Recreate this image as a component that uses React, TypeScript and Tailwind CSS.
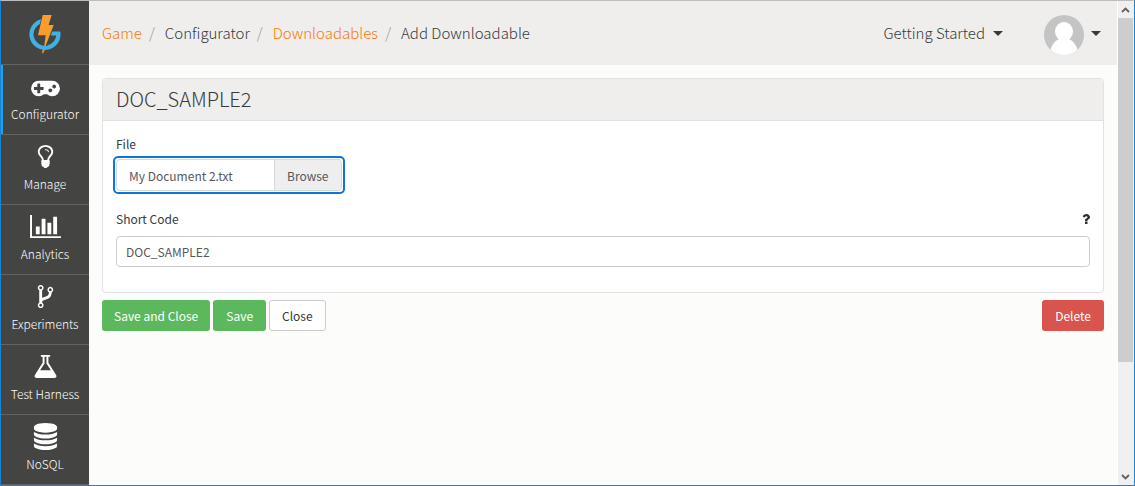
import { useState } from "react";

const icons = {
  gamepad:
    "M896 1088v-128q0-14-9-23t-23-9h-192v-192q0-14-9-23t-23-9h-128q-14 0-23 9t-9 23v192h-192q-14 0-23 9t-9 23v128q0 14 9 23t23 9h192v192q0 14 9 23t23 9h128q14 0 23-9t9-23v-192h192q14 0 23-9t9-23zm576 64q0-53-37.5-90.5t-90.5-37.5-90.5 37.5-37.5 90.5 37.5 90.5 90.5 37.5 90.5-37.5 37.5-90.5zm256-256q0-53-37.5-90.5t-90.5-37.5-90.5 37.5-37.5 90.5 37.5 90.5 90.5 37.5 90.5-37.5 37.5-90.5zm256 128q0 212-150 362t-362 150q-192 0-338-128h-220q-146 128-338 128-212 0-362-150t-150-362 150-362 362-150h896q212 0 362 150t150 362z",
  bulb: "M1120 576q0 13-9.5 22.5t-22.5 9.5-22.5-9.5-9.5-22.5q0-46-54-71t-106-25q-13 0-22.5-9.5t-9.5-22.5 9.5-22.5 22.5-9.5q50 0 99.5 16t87 54 37.5 90zm160 0q0-72-34.5-134t-90-101.5-123-62-136.5-22.5-136.5 22.5-123 62-90 101.5-34.5 134q0 101 68 180 10 11 30.5 33t30.5 33q128 153 141 298h228q13-145 141-298 10-11 30.5-33t30.5-33q68-79 68-180zm128 0q0 155-103 268-45 49-74.5 87t-59.5 95.5-34 107.5q47 28 47 82 0 37-25 64 25 27 25 64 0 52-45 81 13 23 13 47 0 46-31.5 71t-77.5 25q-20 44-60 70t-87 26-87-26-60-70q-46 0-77.5-25t-31.5-71q0-24 13-47-45-29-45-81 0-37 25-64-25-27-25-64 0-54 47-82-4-50-34-107.5t-59.5-95.5-74.5-87q-103-113-103-268 0-99 44.5-184.5t117-142 164-89 186.5-32.5 186.5 32.5 164 89 117 142 44.5 184.5z",
  chart:
    "M640 896v512h-256v-512h256zm384-512v1024h-256v-1024h256zm1024 1152v128h-2048v-1536h128v1408h1920zm-640-896v768h-256v-768h256zm384-384v1152h-256v-1152h256z",
  fork: "M672 1472q0-40-28-68t-68-28-68 28-28 68 28 68 68 28 68-28 28-68zm0-1152q0-40-28-68t-68-28-68 28-28 68 28 68 68 28 68-28 28-68zm640 128q0-40-28-68t-68-28-68 28-28 68 28 68 68 28 68-28 28-68zm96 0q0 52-26 96.5t-70 69.5q-2 287-226 414-67 38-203 81-128 40-169.5 71t-41.5 100v26q44 25 70 69.5t26 96.5q0 80-56 136t-136 56-136-56-56-136q0-52 26-96.5t70-69.5v-820q-44-25-70-69.5t-26-96.5q0-80 56-136t136-56 136 56 56 136q0 52-26 96.5t-70 69.5v497q54-26 154-57 55-17 87.5-29.5t70.5-31 59-39.5 40.5-51 28-69.5 8.5-91.5q-44-25-70-69.5t-26-96.5q0-80 56-136t136-56 136 56 56 136z",
  flask:
    "M1591 1448q56 89 21.5 152.5t-140.5 63.5h-1152q-106 0-140.5-63.5t21.5-152.5l503-793v-399h-64q-26 0-45-19t-19-45 19-45 45-19h512q26 0 45 19t19 45-19 45-45 19h-64v399zm-779-725l-272 429h712l-272-429-20-31v-436h-128v436z",
  database:
    "M896 768q237 0 443-43t325-127v170q0 69-103 128t-280 93.5-385 34.5-385-34.5-280-93.5-103-128v-170q119 84 325 127t443 43zm0 768q237 0 443-43t325-127v170q0 69-103 128t-280 93.5-385 34.5-385-34.5-280-93.5-103-128v-170q119 84 325 127t443 43zm0-384q237 0 443-43t325-127v170q0 69-103 128t-280 93.5-385 34.5-385-34.5-280-93.5-103-128v-170q119 84 325 127t443 43zm0-1152q208 0 385 34.5t280 93.5 103 128v128q0 69-103 128t-280 93.5-385 34.5-385-34.5-280-93.5-103-128v-128q0-69 103-128t280-93.5 385-34.5z",
  question:
    "M1088 1256v240q0 16-12 28t-28 12h-240q-16 0-28-12t-12-28v-240q0-16 12-28t28-12h240q16 0 28 12t12 28zm316-600q0 54-15.5 101t-35 76.5-55 59.5-57.5 43.5-61 35.5q-41 23-68.5 65t-27.5 67q0 17-12 32.5t-28 15.5h-240q-15 0-25.5-18.5t-10.5-37.5v-45q0-83 65-156.5t143-108.5q59-27 84-56t25-76q0-42-46.5-74t-107.5-32q-65 0-108 29-35 25-107 115-13 16-31 16-12 0-25-8l-164-125q-13-10-15.5-25t5.5-28q160-266 464-266 80 0 161 31t146 83 106 127.5 41 158.5z",
};

const navItems = [
  { label: "Configurator", path: icons.gamepad, viewBox: "0 0 2048 1792", active: true },
  { label: "Manage", path: icons.bulb, viewBox: "0 0 1792 1792" },
  { label: "Analytics", path: icons.chart, viewBox: "0 0 2048 1792" },
  { label: "Experiments", path: icons.fork, viewBox: "0 0 1792 1792" },
  { label: "Test Harness", path: icons.flask, viewBox: "0 0 1792 1792" },
  { label: "NoSQL", path: icons.database, viewBox: "0 0 1792 1792" },
];

function Logo() {
  return (
    <svg viewBox="0 0 32 40" className="mt-[2px] h-10 w-8" aria-hidden="true">
      <path d="M16.500 35L14 40L12.800 38L13.500 35Z" fill="#c98432" />
      <path d="M12.500 7.300A13.500 13.500 0 1 0 29.400 19.500H18" fill="none" stroke="#3fb1e5" strokeWidth="4.200" />
      <path d="M13 1L8 22.200H16L14.800 32H18L25.800 10.300H21L23.500 1Z" fill="#444442" />
      <path d="M13.700 1H22.700L19.600 11H24.700L16.600 32H15.200L16.700 21.300H9Z" fill="#f89c2c" />
    </svg>
  );
}

function Caret() {
  return (
    <svg viewBox="0 0 10 5" className="h-[5px] w-[10px]" aria-hidden="true">
      <path d="M0 0H10L5 5Z" fill="#373a3c" />
    </svg>
  );
}

function Sidebar() {
  return (
    <nav className="w-[88px] shrink-0 bg-[#444442] text-white">
      <a href="#home" aria-label="Home" className="flex h-16 items-center justify-center border-b border-[#636361]">
        <Logo />
      </a>
      <ul>
        {navItems.map((item) => (
          <li key={item.label} className="border-b border-[#636361]">
            <a
              href="#section"
              className={
                item.active
                  ? "flex h-[69px] flex-col items-center border-l-2 border-[#1fa3e8] pt-2 pr-[2px]"
                  : "flex h-[69px] flex-col items-center pt-2"
              }
            >
              <svg viewBox={item.viewBox} className="h-[27px] w-[31px]" fill="currentColor" aria-hidden="true">
                <path d={item.path} />
              </svg>
              <span className="mt-[5px] text-[12px] leading-[18px] font-light whitespace-nowrap">{item.label}</span>
            </a>
          </li>
        ))}
      </ul>
    </nav>
  );
}

function Header() {
  return (
    <header className="flex h-16 items-center justify-between bg-[#efeeed] pr-4 pl-[13px] text-[15px] leading-5 font-light">
      <nav aria-label="Breadcrumb">
        <ol className="flex items-center">
          <li><a href="#game" className="text-[#ff7a00]">Game</a></li>
          <li className="px-[7px] text-[#999999]">/</li>
          <li className="pl-[3px]">Configurator</li>
          <li className="px-[7px] text-[#999999]">/</li>
          <li className="pl-[3px]"><a href="#downloadables" className="text-[#ff7a00]">Downloadables</a></li>
          <li className="px-[7px] text-[#999999]">/</li>
          <li className="pl-[3px]">Add Downloadable</li>
        </ol>
      </nav>
      <div className="flex items-center gap-[41px]">
        <button type="button" className="flex items-center gap-2">
          Getting Started
          <Caret />
        </button>
        <button type="button" aria-label="Account" className="flex items-center gap-[7px]">
          <svg viewBox="0 0 40 40" className="mt-1 size-10" aria-hidden="true">
            <defs>
              <clipPath id="avatar"><circle cx="20" cy="20" r="20" /></clipPath>
            </defs>
            <g clipPath="url(#avatar)">
              <rect width="40" height="40" fill="#c4c4c4" />
              <path d="M5 40C7 30 11 25 16 24H24C29 25 33 30 35 40Z" fill="#fff" />
              <ellipse cx="20" cy="16.500" rx="9" ry="9.500" fill="#fff" />
            </g>
          </svg>
          <Caret />
        </button>
      </div>
    </header>
  );
}

function DownloadableForm() {
  const [code, setCode] = useState("DOC_SAMPLE2");
  const [fileName, setFileName] = useState("My Document 2.txt");
  return (
    <form className="px-[13px] pt-[13px] text-[12px] leading-[18px]" onSubmit={(e) => e.preventDefault()}>
      <section className="rounded border border-[#e2e2e2] bg-white">
        <h1 className="rounded-t border-b border-[#e2e2e2] bg-[#efeeed] px-[13px] pt-[7px] pb-2 text-[20px] leading-[26px] font-light">
          DOC_SAMPLE2
        </h1>
        <div className="px-[13px] pt-[14px] pb-[25px]">
          <label htmlFor="file" className="block">File</label>
          <div className="mt-[3px] -ml-[3px] w-fit rounded-[5px] border-2 border-[#0e75d8] p-px">
            <label htmlFor="file" className="flex h-8 rounded border border-[#d5d9dd] leading-[32px] text-[#55595c]">
              <span className="w-[157px] pl-3">{fileName}</span>
              <span className="rounded-r border-l border-[#d5d9dd] bg-[#eeeeee] px-3">Browse</span>
            </label>
            <input
              id="file"
              type="file"
              className="sr-only"
              onChange={(e) => setFileName(e.target.files?.[0]?.name ?? fileName)}
            />
          </div>
          <div className="mt-4 flex items-center justify-between">
            <label htmlFor="code">Short Code</label>
            <button type="button" aria-label="Help">
              <svg viewBox="384 256 1024 1280" className="h-[10px] w-2" fill="#2b2d2f" aria-hidden="true">
                <path d={icons.question} />
              </svg>
            </button>
          </div>
          <input
            id="code"
            value={code}
            onChange={(e) => setCode(e.target.value)}
            className="mt-2 block h-[31px] w-full rounded border border-[#cccccc] px-[9px] text-[#55595c]"
          />
        </div>
      </section>
      <div className="mt-[7px] flex gap-[3px]">
        <button type="submit" className="h-[31px] rounded-[3px] bg-[#5cb85c] px-3 text-white">Save and Close</button>
        <button type="button" className="h-[31px] rounded-[3px] bg-[#5cb85c] px-[13px] text-white">Save</button>
        <button type="button" className="h-[31px] rounded-[3px] border border-[#cccccc] bg-white px-3">Close</button>
        <button type="button" className="ml-auto h-[31px] rounded-[3px] bg-[#d9534f] px-[13px] text-white">Delete</button>
      </div>
    </form>
  );
}

function ScrollBar() {
  return (
    <div className="flex w-[17px] shrink-0 flex-col border-l border-white bg-[#f0f0f0] pr-px" aria-hidden="true">
      <svg viewBox="0 0 15 17" className="h-[17px] w-[15px] shrink-0">
        <path d="M4 11L7.500 7.500L11 11" fill="none" stroke="#606060" strokeWidth="1.800" />
      </svg>
      <div className="h-[71%] bg-[#cdcdcd]" />
      <svg viewBox="0 0 15 17" className="mt-auto h-[17px] w-[15px] shrink-0">
        <path d="M4 7L7.500 10.500L11 7" fill="none" stroke="#606060" strokeWidth="1.800" />
      </svg>
    </div>
  );
}

export default function App() {
  return (
    <div className="flex h-screen overflow-hidden border border-[#1883d7] border-t-[#bdbdbd] bg-[#fcfcfa] font-['Noto_Sans_CJK_SC','Open_Sans',sans-serif] text-[#373a3c]">
      <Sidebar />
      <main className="min-w-0 flex-1">
        <Header />
        <DownloadableForm />
      </main>
      <ScrollBar />
    </div>
  );
}
